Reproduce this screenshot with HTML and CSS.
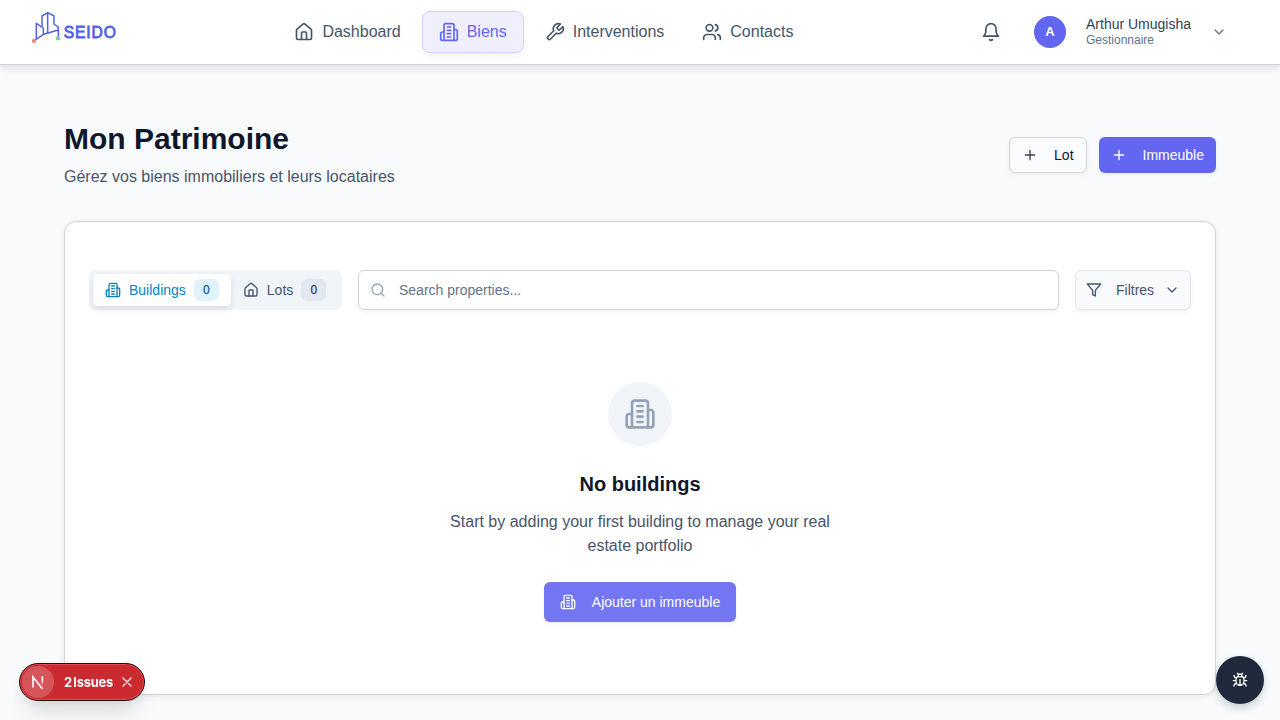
FILE: index.html
```html
<!DOCTYPE html>
<html lang="fr">
<head>
<meta charset="utf-8">
<title>SEIDO - Mon Patrimoine</title>
<link rel="stylesheet" href="styles.css">
</head>
<body>
<svg class="sprite" aria-hidden="true">
  <symbol id="building" viewBox="0 0 24 24"><path d="M6 22V4a2 2 0 0 1 2-2h8a2 2 0 0 1 2 2v18Z"/><path d="M6 12H4a2 2 0 0 0-2 2v6a2 2 0 0 0 2 2h2M18 9h2a2 2 0 0 1 2 2v9a2 2 0 0 1-2 2h-2M10 6h4M10 10h4M10 14h4M10 18h4"/></symbol>
  <symbol id="house" viewBox="0 0 24 24"><path d="M15 21v-8a1 1 0 0 0-1-1h-4a1 1 0 0 0-1 1v8"/><path d="M3 10a2 2 0 0 1 .709-1.528l7-5.999a2 2 0 0 1 2.582 0l7 5.999A2 2 0 0 1 21 10v9a2 2 0 0 1-2 2H5a2 2 0 0 1-2-2z"/></symbol>
  <symbol id="wrench" viewBox="0 0 24 24"><path d="M14.7 6.3a1 1 0 0 0 0 1.4l1.6 1.6a1 1 0 0 0 1.4 0l3.77-3.77a6 6 0 0 1-7.94 7.94l-6.91 6.91a2.12 2.12 0 0 1-3-3l6.91-6.91a6 6 0 0 1 7.94-7.94l-3.76 3.76z"/></symbol>
  <symbol id="users" viewBox="0 0 24 24"><path d="M16 21v-2a4 4 0 0 0-4-4H6a4 4 0 0 0-4 4v2"/><circle cx="9" cy="7" r="4"/><path d="M22 21v-2a4 4 0 0 0-3-3.87M16 3.13a4 4 0 0 1 0 7.75"/></symbol>
  <symbol id="bell" viewBox="0 0 24 24"><path d="M6 8a6 6 0 0 1 12 0c0 7 3 9 3 9H3s3-2 3-9M10.3 21a1.94 1.94 0 0 0 3.4 0"/></symbol>
  <symbol id="chevron" viewBox="0 0 24 24"><path d="m6 9 6 6 6-6"/></symbol>
  <symbol id="plus" viewBox="0 0 24 24"><path d="M5 12h14M12 5v14"/></symbol>
  <symbol id="search" viewBox="0 0 24 24"><circle cx="11" cy="11" r="8"/><path d="m21 21-4.3-4.3"/></symbol>
  <symbol id="filter" viewBox="0 0 24 24"><path d="M22 3H2l8 9.46V19l4 2v-8.54L22 3z"/></symbol>
  <symbol id="close" viewBox="0 0 24 24"><path d="M4 4l16 16M20 4L4 20"/></symbol>
  <symbol id="bug" viewBox="0 0 24 24"><path d="m8 2 1.88 1.88M14.12 3.88 16 2M9 7.13v-1a3.003 3.003 0 1 1 6 0v1"/><path d="M12 20c-3.3 0-6-2.7-6-6v-3a4 4 0 0 1 4-4h4a4 4 0 0 1 4 4v3c0 3.3-2.7 6-6 6M12 20v-9M6.53 9C4.6 8.8 3 7.1 3 5M6 13H2M3 21c0-2.1 1.7-3.9 3.8-4M20.97 5c0 2.1-1.6 3.8-3.5 4M22 13h-4M17.2 17c2.1.1 3.8 1.9 3.8 4"/></symbol>
</svg>

<header class="header">
  <svg class="logo" viewBox="36 30 252 105" role="img" aria-label="SEIDO">
    <g class="logo-lines"><path d="M42 122L71 103L115 90"/><path d="M49 117V70L70 84V103"/><path d="M66 78V48L83 38L102 48V72L115 82V112"/><path d="M83 38V99"/></g>
    <circle cx="42" cy="123" r="6.5" fill="#f9877b"/><circle cx="114" cy="115" r="6.5" fill="#7fc6ae"/>
    <text class="logo-text" x="131" y="113" textLength="157">SEIDO</text>
  </svg>
  <nav class="nav">
    <a class="nav-item"><svg class="icon i20"><use href="#house"/></svg>Dashboard</a>
    <a class="nav-item nav-active"><svg class="icon i20"><use href="#building"/></svg>Biens</a>
    <a class="nav-item"><svg class="icon i20"><use href="#wrench"/></svg>Interventions</a>
    <a class="nav-item"><svg class="icon i20"><use href="#users"/></svg>Contacts</a>
  </nav>
  <div class="account">
    <svg class="icon i20 bell"><use href="#bell"/></svg>
    <span class="avatar">A</span>
    <div class="identity"><span class="name">Arthur Umugisha</span><span class="role">Gestionnaire</span></div>
    <svg class="icon i16 account-chevron"><use href="#chevron"/></svg>
  </div>
</header>

<main class="main">
  <div class="page-head">
    <div>
      <h1 class="title">Mon Patrimoine</h1>
      <p class="subtitle">Gérez vos biens immobiliers et leurs locataires</p>
    </div>
    <div class="actions">
      <button class="btn btn-outline"><svg class="icon i16"><use href="#plus"/></svg>Lot</button>
      <button class="btn btn-primary"><svg class="icon i16"><use href="#plus"/></svg>Immeuble</button>
    </div>
  </div>

  <section class="card">
    <div class="toolbar">
      <div class="tabs">
        <span class="tab tab-active"><svg class="icon i16"><use href="#building"/></svg>Buildings<span class="count">0</span></span>
        <span class="tab"><svg class="icon i16"><use href="#house"/></svg>Lots<span class="count">0</span></span>
      </div>
      <div class="search"><svg class="icon i16"><use href="#search"/></svg><span>Search properties...</span></div>
      <button class="filters"><svg class="icon i16"><use href="#filter"/></svg><span>Filtres</span><svg class="icon i16"><use href="#chevron"/></svg></button>
    </div>
    <div class="empty">
      <span class="empty-icon"><svg class="icon i32"><use href="#building"/></svg></span>
      <h2 class="empty-title">No buildings</h2>
      <p class="empty-text">Start by adding your first building to manage your real estate portfolio</p>
      <button class="btn-add"><svg class="icon i16"><use href="#building"/></svg>Ajouter un immeuble</button>
    </div>
  </section>
</main>

<div class="issues">
  <span class="issues-mark"><svg class="next-mark" viewBox="0 0 14 14">
    <defs><linearGradient id="fade" x1="0" y1="0" x2="0" y2="1"><stop offset=".4" stop-color="#fff"/><stop offset="1" stop-color="#fff" stop-opacity="0"/></linearGradient></defs>
    <path d="M2 12.5V2L11.6 14" fill="none" stroke="#fff" stroke-width="1.6"/><rect x="10.6" y="1.2" width="1.6" height="9.5" fill="url(#fade)"/></svg></span>
  <span class="issues-label">2 Issues</span>
  <svg class="icon issues-close"><use href="#close"/></svg>
</div>
<button class="debug"><svg class="icon i16"><use href="#bug"/></svg></button>
</body>
</html>
```
FILE: styles.css
```css
* { box-sizing: border-box; }
body { margin: 0; height: 720px; overflow: hidden; background: #f8fafc; font-family: "Liberation Sans", Arial, sans-serif; color: #0f172a; }
h1, h2, p { margin: 0; }
button { font: inherit; }
.sprite { position: absolute; width: 0; height: 0; }
.icon { fill: none; stroke: currentColor; stroke-width: 2; stroke-linecap: round; stroke-linejoin: round; flex: none; display: block; }
.i16 { width: 16px; height: 16px; }
.i20 { width: 20px; height: 20px; }
.i32 { width: 32px; height: 32px; }

.header { height: 65px; display: flex; align-items: center; padding: 0 53px 1px 32px; background: #fff; border-bottom: 1px solid #cfd2de; box-shadow: 0 4px 8px rgba(0,0,0,.09); }
.logo { width: 84px; height: 35px; margin-top: -8px; }
.logo-lines { fill: none; stroke: #4f63e6; stroke-width: 4.5; stroke-linejoin: round; stroke-linecap: round; }
.logo-text { fill: #4f63e6; stroke: #4f63e6; stroke-width: 2.4; font-size: 47px; }
.nav { display: flex; gap: 4px; margin-left: 161.4px; }
.nav-item { display: flex; align-items: center; gap: 8px; height: 42px; padding: 0 16px; border: 1px solid transparent; border-radius: 8px; font-size: 16px; color: #475569; white-space: nowrap; }
.nav-active { color: #6366f1; background: #f0effd; border-color: #d4d2fa; box-shadow: 0 3px 7px rgba(0,0,0,.06); }
.account { margin-left: auto; display: flex; align-items: center; }
.bell { color: #475569; }
.avatar { width: 32px; height: 32px; margin: 0 20px 0 33px; border-radius: 50%; background: #6366f1; color: #fff; font-size: 13px; font-weight: 700; display: grid; place-items: center; }
.identity { display: flex; flex-direction: column; width: 105px; margin-right: 20px; white-space: nowrap; }
.name { font-size: 14px; line-height: 17px; color: #334155; }
.role { font-size: 12px; line-height: 15px; color: #64748b; }
.account-chevron { color: #64748b; }

.main { padding: 53px 64px 0; }
.page-head { display: flex; justify-content: space-between; align-items: center; height: 72px; padding-top: 2px; }
.title { font-size: 30px; line-height: 36px; font-weight: 700; }
.subtitle { margin-top: 8px; font-size: 16px; line-height: 24px; color: #475569; }
.actions { display: flex; gap: 12px; }
.btn { height: 36px; display: flex; align-items: center; gap: 16px; padding: 0 12px; border: 0; border-radius: 6px; font-size: 14px; box-shadow: 0 2px 5px rgba(0,0,0,.05); }
.btn-outline { background: #fafbfd; border: 1px solid #d1d4df; color: #0f172a; }
.btn-outline .icon { color: #334155; }
.btn-primary { background: #6366f1; color: #fff; }

.card { height: 474px; margin-top: 31px; padding: 48px 24px 0; background: #fff; border: 1px solid #d0d3de; border-radius: 12px; box-shadow: 0 2px 6px rgba(0,0,0,.07); }
.toolbar { display: flex; gap: 16px; height: 40px; }
.tabs { display: flex; width: 253px; padding: 4px; background: #f1f5f9; border-radius: 6px; }
.tab { display: flex; align-items: center; gap: 8px; height: 32px; padding: 0 12px; border-radius: 4px; font-size: 14px; color: #475569; }
.tab-active { background: #fff; color: #0284c7; box-shadow: 0 3px 7px rgba(0,0,0,.11); }
.count { width: 25px; height: 22px; border-radius: 6px; display: grid; place-items: center; font-size: 12px; background: #e2e8f0; color: #334155; -webkit-text-stroke: .25px; }
.tab-active .count { background: #e0f2fe; color: #075985; }
.search { flex: 1; display: flex; align-items: center; gap: 13px; padding: 0 11px; border: 1px solid #d1d4df; border-radius: 6px; font-size: 14px; color: #64748b; box-shadow: 0 2px 5px rgba(0,0,0,.05); }
.search .icon { color: #94a3b8; }
.filters { width: 116px; display: flex; align-items: center; padding: 0 10px; border: 1px solid #e2e8f0; border-radius: 6px; background: #f8fafc; color: #475569; font-size: 14px; box-shadow: 0 2px 5px rgba(0,0,0,.05); }
.filters span { margin: 0 10px 0 14px; }
.empty { display: flex; flex-direction: column; align-items: center; padding-top: 72px; }
.empty-icon { width: 64px; height: 64px; border-radius: 50%; background: #f1f5f9; color: #94a3b8; display: grid; place-items: center; }
.empty-title { margin-top: 24px; font-size: 20px; line-height: 28px; font-weight: 700; }
.empty-text { margin-top: 12px; width: 384px; font-size: 16px; line-height: 24px; color: #475569; text-align: center; }
.btn-add { margin-top: 24px; height: 40px; display: flex; align-items: center; gap: 16px; padding: 0 16px; border: 0; border-radius: 6px; background: #7375f2; color: #fff; font-size: 14px; box-shadow: 0 2px 5px rgba(0,0,0,.06); }

.issues { position: fixed; left: 19px; top: 663px; width: 126px; height: 38px; display: flex; align-items: center; padding-left: 2px; border: 1px solid #1b1113; border-radius: 19px; background: #ca2a30; color: #fff; box-shadow: inset 0 0 0 1px #e5484d, 0 16px 24px -8px rgba(0,0,0,.16), 0 4px 8px rgba(0,0,0,.05); }
.issues-mark { width: 32px; height: 32px; border-radius: 50%; background: #d6555b; display: grid; place-items: center; }
.next-mark { width: 14px; height: 14px; }
.issues-label { margin-left: 10px; width: 50px; font: 700 13px "Inter", sans-serif; letter-spacing: -.25px; word-spacing: -1.5px; white-space: nowrap; }
.issues-close { width: 12px; height: 12px; margin-left: 7px; stroke-width: 2.4; }
.debug { position: fixed; left: 1216px; top: 656px; width: 48px; height: 48px; padding: 0; border: 0; border-radius: 50%; background: #1e293b; color: #fff; display: grid; place-items: center; box-shadow: 0 4px 8px rgba(0,0,0,.18); }
```
